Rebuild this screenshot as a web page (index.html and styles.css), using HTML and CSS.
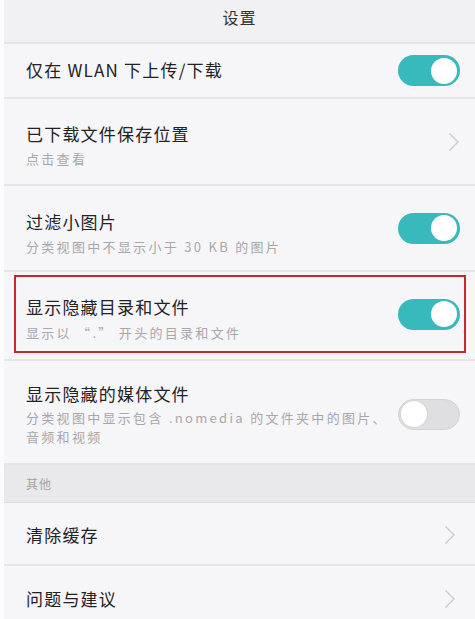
FILE: index.html
```html
<!DOCTYPE html>
<html lang="zh-CN">
<head>
<meta charset="utf-8">
<title>设置</title>
<link rel="stylesheet" href="styles.css">
</head>
<body>
<div class="page">
  <header class="topbar">设置</header>

  <div class="row single">
    <div class="text"><div class="title">仅在 WLAN 下上传/下载</div></div>
    <div class="toggle on"><span class="knob"></span></div>
  </div>

  <div class="row double">
    <div class="text">
      <div class="title">已下载文件保存位置</div>
      <div class="sub">点击查看</div>
    </div>
    <svg class="chev" width="12" height="20" viewBox="0 0 12 20"><path d="M1.5 1.5 L10 10 L1.5 18.5" fill="none" stroke="#c9c9cc" stroke-width="1.3"/></svg>
  </div>

  <div class="row double">
    <div class="text">
      <div class="title">过滤小图片</div>
      <div class="sub">分类视图中不显示小于 30 KB 的图片</div>
    </div>
    <div class="toggle on"><span class="knob"></span></div>
  </div>

  <div class="row boxed">
    <div class="redbox">
      <div class="text">
        <div class="title">显示隐藏目录和文件</div>
        <div class="sub">显示以 “.” 开头的目录和文件</div>
      </div>
      <div class="toggle on"><span class="knob"></span></div>
    </div>
  </div>

  <div class="row triple">
    <div class="text">
      <div class="title">显示隐藏的媒体文件</div>
      <div class="sub">分类视图中显示包含 .nomedia 的文件夹中的图片、<br>音频和视频</div>
    </div>
    <div class="toggle off"><span class="knob"></span></div>
  </div>

  <div class="section">其他</div>

  <div class="row link">
    <div class="text"><div class="title">清除缓存</div></div>
    <svg class="chev" width="12" height="20" viewBox="0 0 12 20"><path d="M1.5 1.5 L10 10 L1.5 18.5" fill="none" stroke="#c9c9cc" stroke-width="1.3"/></svg>
  </div>

  <div class="row link last">
    <div class="text"><div class="title">问题与建议</div></div>
    <svg class="chev" width="12" height="20" viewBox="0 0 12 20"><path d="M1.5 1.5 L10 10 L1.5 18.5" fill="none" stroke="#c9c9cc" stroke-width="1.3"/></svg>
  </div>
</div>
</body>
</html>
```

FILE: styles.css
```css
html, body {
  margin: 0;
  padding: 0;
  background: #fbfbfc;
}
body {
  font-family: "Noto Sans CJK SC", "Noto Sans", sans-serif;
  color: #222;
  overflow: hidden;
}
.page {
  margin-left: 4px;
  background: #f6f5f8;
  min-height: 619px;
}
.topbar {
  height: 44px;
  box-sizing: border-box;
  padding-top: 5px;
  text-align: center;
  font-size: 16px;
  line-height: 24px;
  letter-spacing: 1px;
  color: #333;
  background: #f1f0f3;
  border-bottom: 2px solid #e4e3e6;
}
.row {
  display: flex;
  align-items: center;
  justify-content: space-between;
  padding: 0 15px 0 22px;
  border-bottom: 2px solid #e6e5e8;
  box-sizing: border-box;
}
.text { display: flex; flex-direction: column; }
.title {
  font-size: 17px;
  line-height: 22px;
  letter-spacing: 1.2px;
  color: #222;
}
.sub {
  margin-top: 4px;
  font-size: 13px;
  line-height: 20px;
  letter-spacing: 2.3px;
  color: #a8a8ab;
  white-space: nowrap;
}
.single { height: 55px; }
.single .text { margin-top: -2px; }
.double { height: 87px; }
.double .text { margin-top: 9px; }
.row.double:nth-of-type(3) { height: 86px; }
.row.double:nth-of-type(3) .text { margin-top: 11px; }
.triple { height: 104px; padding-top: 4px; }
.triple .sub { line-height: 19px; margin-top: 3px; }
.link { height: 63px; padding-top: 3px; padding-right: 19px; }
.last { border-bottom: none; }
.chev { display: block; }

.boxed {
  height: 89px;
  padding: 3px 9px 6px 10px;
  align-items: stretch;
}
.redbox {
  flex: 1;
  display: flex;
  align-items: center;
  justify-content: space-between;
  border: 2px solid #c8262e;
  padding: 0 4px 0 10px;
}
.redbox .text { margin-top: 10px; }
.redbox .sub { margin-top: 5px; }

.toggle {
  width: 62px;
  height: 31px;
  box-sizing: border-box;
  border-radius: 16px;
  display: flex;
  align-items: center;
  padding: 0 3px;
  flex-shrink: 0;
}
.toggle .knob {
  width: 26px;
  height: 26px;
  border-radius: 50%;
  background: #fff;
  display: block;
}
.toggle.on {
  background: #38b9bc;
  justify-content: flex-end;
}
.toggle.off {
  background: #dfdfe1;
  border: 1px solid #d3d3d6;
  justify-content: flex-start;
  padding: 0 2px;
}
.toggle.off .knob {
  box-shadow: 0 0 0 1px #d6d6d8;
}
.section {
  height: 38px;
  box-sizing: border-box;
  padding: 10px 0 0 22px;
  font-size: 12px;
  line-height: 18px;
  letter-spacing: 1px;
  color: #a2a2a5;
  background: #e9e8eb;
  border-bottom: 1px solid #dcdbde;
}
```
